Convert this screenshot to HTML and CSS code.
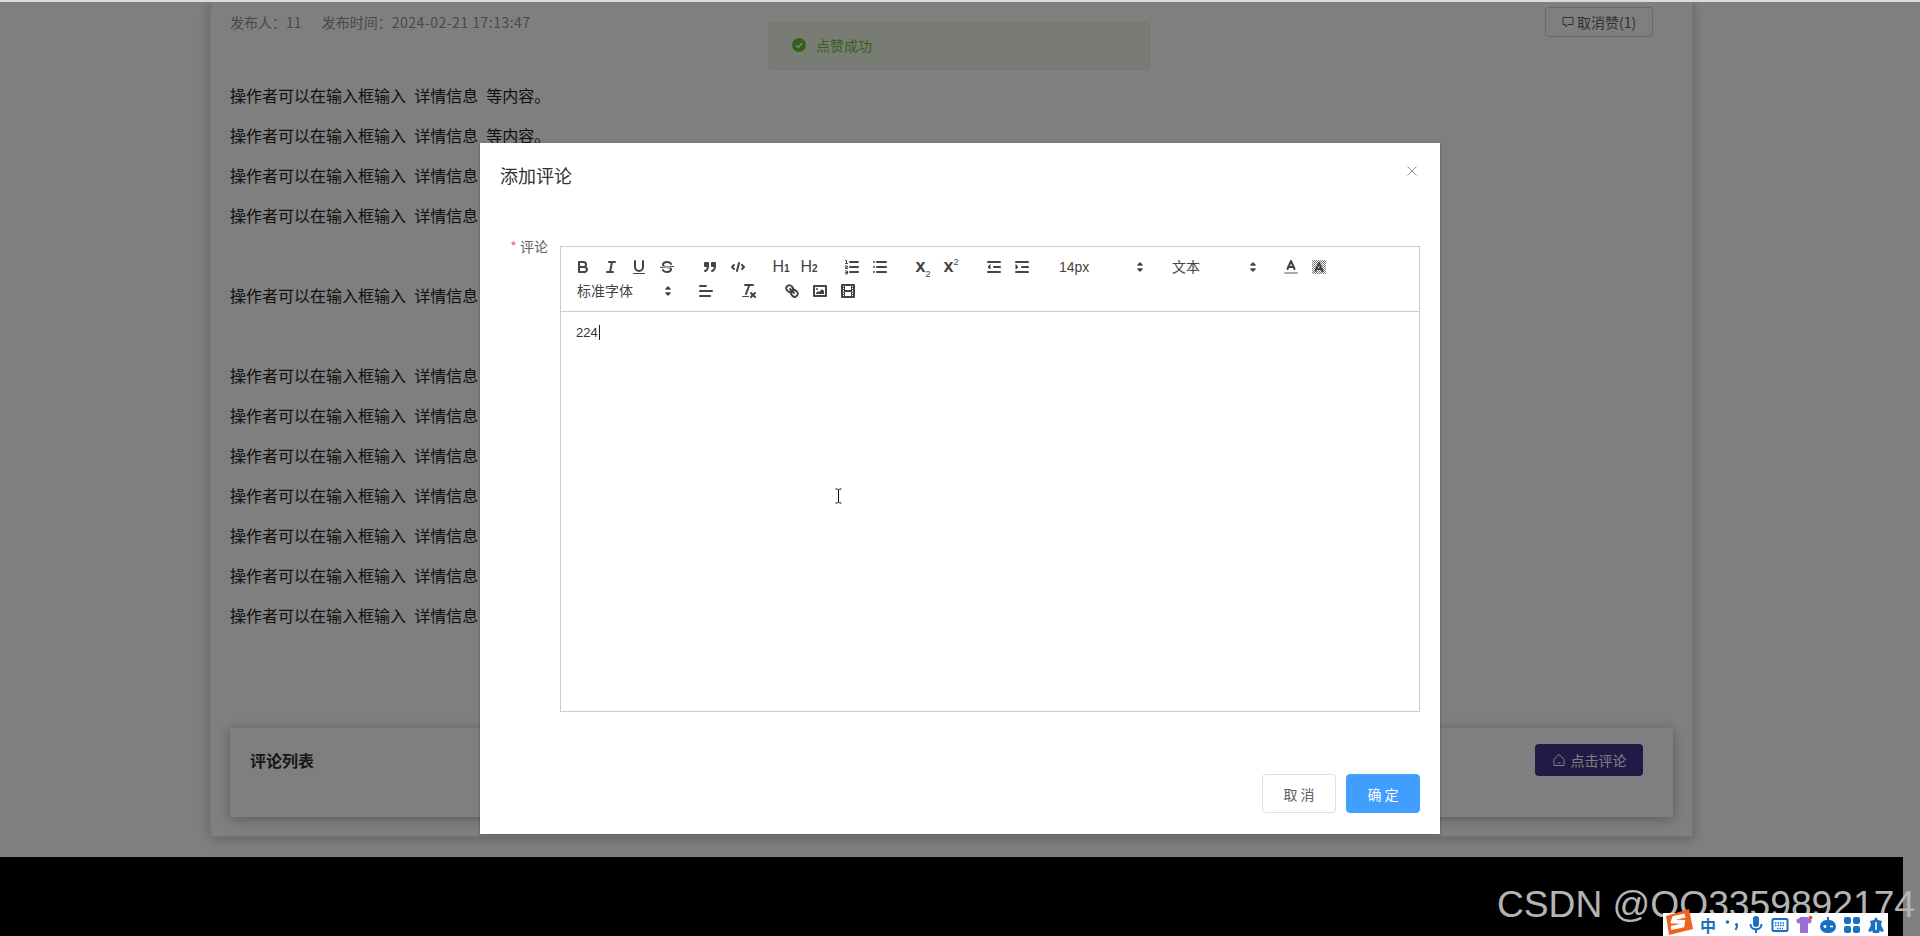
FILE: index.html
```html
<!DOCTYPE html>
<html lang="zh-CN">
<head>
    <meta charset="UTF-8">
    <meta name="viewport" content="width=device-width, initial-scale=1.0">
    <title>详情</title>
    <link rel="stylesheet" href="styles.css">
</head>
<body>
<div class="app">
    <div class="top-strip"></div>

    <div class="page">
        <div class="detail-card">
            <div class="meta-row">
                <div class="meta-text">发布人：11 <span class="meta-gap">发布时间：<span class="meta-date">2024-02-21 17:13:47</span></span></div>
                <button class="like-btn">
                    <svg class="like-icon" viewBox="0 0 14 14"><path d="M2 2.5h10v7H7l-2.5 2.500v-2.500H2z"/></svg>
                    取消赞(1)
                </button>
            </div>
            <div class="article">
                <p>操作者可以在输入框输入&nbsp;&nbsp;详情信息&nbsp;&nbsp;等内容。</p>
                <p>操作者可以在输入框输入&nbsp;&nbsp;详情信息&nbsp;&nbsp;等内容。</p>
                <p>操作者可以在输入框输入&nbsp;&nbsp;详情信息&nbsp;&nbsp;等内容。</p>
                <p>操作者可以在输入框输入&nbsp;&nbsp;详情信息&nbsp;&nbsp;等内容。</p>
                <p>&nbsp;</p>
                <p>操作者可以在输入框输入&nbsp;&nbsp;详情信息&nbsp;&nbsp;等内容。</p>
                <p>&nbsp;</p>
                <p>操作者可以在输入框输入&nbsp;&nbsp;详情信息&nbsp;&nbsp;等内容。</p>
                <p>操作者可以在输入框输入&nbsp;&nbsp;详情信息&nbsp;&nbsp;等内容。</p>
                <p>操作者可以在输入框输入&nbsp;&nbsp;详情信息&nbsp;&nbsp;等内容。</p>
                <p>操作者可以在输入框输入&nbsp;&nbsp;详情信息&nbsp;&nbsp;等内容。</p>
                <p>操作者可以在输入框输入&nbsp;&nbsp;详情信息&nbsp;&nbsp;等内容。</p>
                <p>操作者可以在输入框输入&nbsp;&nbsp;详情信息&nbsp;&nbsp;等内容。</p>
                <p>操作者可以在输入框输入&nbsp;&nbsp;详情信息&nbsp;&nbsp;等内容。</p>
            </div>
            <div class="comment-box">
                <div class="comment-title">评论列表</div>
                <button class="comment-btn">
                    <svg class="home-icon" viewBox="0 0 14 14"><path d="M2 6.200 7 1.500l5 4.700v6.300H2z"/><path d="M5.500 10h3"/></svg>
                    点击评论
                </button>
            </div>
        </div>

        <!-- 提示消息在遮罩下面 -->
        <div class="toast">
            <svg class="toast-icon" viewBox="0 0 14 14"><circle cx="7" cy="7" r="7"/><path d="M3.800 7.200 6.200 9.500l4-4.600"/></svg>
            <span>点赞成功</span>
        </div>
        <div class="mask"></div>
    </div>

    <div class="video-bar"></div>

    <!-- 添加评论弹窗 -->
    <div class="dialog">
        <div class="dialog-header">
            <span class="dialog-title">添加评论</span>
            <svg class="dialog-close" viewBox="0 0 12 12"><path d="M1.500 1.500l9 9M10.500 1.500l-9 9"/></svg>
        </div>
        <div class="form-row">
            <label class="form-label"><span class="required">*</span> 评论</label>
            <div class="editor">
                <div class="toolbar">
                    <span class="formats">
                        <span class="tool"><svg viewBox="0 0 18 18"><path class="st" d="M5,4H9.500A2.500,2.500,0,0,1,12,6.500v0A2.500,2.500,0,0,1,9.500,9H5V4Z"/><path class="st" d="M5,9h5.500A2.500,2.500,0,0,1,13,11.500v0A2.500,2.500,0,0,1,10.500,14H5V9Z"/></svg></span>
                        <span class="tool"><svg viewBox="0 0 18 18"><line class="st" x1="7" x2="13" y1="4" y2="4"/><line class="st" x1="5" x2="11" y1="14" y2="14"/><line class="st" x1="8" x2="10" y1="14" y2="4"/></svg></span>
                        <span class="tool"><svg viewBox="0 0 18 18"><path class="st" d="M5,3V9a4,4,0,0,0,4,4H9a4,4,0,0,0,4-4V3"/><rect class="fl" height="1" rx=".5" ry=".5" width="12" x="3" y="15"/></svg></span>
                        <span class="tool"><svg viewBox="0 0 18 18"><line class="st thin" x1="15.500" x2="2.500" y1="8.500" y2="9.500"/><path class="fl" d="M9.007,8C6.542,7.791,6,7.519,6,6.500,6,5.792,7.283,5,9,5c1.571,0,2.765.679,2.969,1.309a1,1,0,0,0,1.900-.617C13.356,4.106,11.354,3,9,3,6.200,3,4,4.538,4,6.500a3.200,3.200,0,0,0,.500,1.843Z"/><path class="fl" d="M8.984,10C11.457,10.208,12,10.479,12,11.500c0,.708-1.283,1.500-3,1.500-1.571,0-2.765-.679-2.969-1.309a1,1,0,1,0-1.900.617C4.644,13.894,6.646,15,9,15c2.800,0,5-1.538,5-3.500a3.200,3.200,0,0,0-.500-1.843Z"/></svg></span>
                    </span>
                    <span class="formats">
                        <span class="tool"><svg viewBox="0 0 18 18"><rect class="fl st" height="3" width="3" x="4" y="5"/><rect class="fl st" height="3" width="3" x="11" y="5"/><path class="st" d="M7,8c0,4.031-3,5-3,5"/><path class="st" d="M14,8c0,4.031-3,5-3,5"/></svg></span>
                        <span class="tool"><svg viewBox="0 0 18 18"><polyline class="st" points="5 7 3 9 5 11"/><polyline class="st" points="13 7 15 9 13 11"/><line class="st" x1="10" x2="8" y1="5" y2="13"/></svg></span>
                    </span>
                    <span class="formats">
                        <span class="tool tool-text">H<small>1</small></span>
                        <span class="tool tool-text">H<small>2</small></span>
                    </span>
                    <span class="formats">
                        <span class="tool"><svg viewBox="0 0 18 18"><line class="st" x1="7" x2="15" y1="4" y2="4"/><line class="st" x1="7" x2="15" y1="9" y2="9"/><line class="st" x1="7" x2="15" y1="14" y2="14"/><path class="st thin" d="M2.500 2.500h1v3M2.500 5.500h2M2.500 8h2v1.200h-2v1.300h2M2.500 13h2v3h-2M2.500 14.500h2"/></svg></span>
                        <span class="tool"><svg viewBox="0 0 18 18"><line class="st" x1="6" x2="15" y1="4" y2="4"/><line class="st" x1="6" x2="15" y1="9" y2="9"/><line class="st" x1="6" x2="15" y1="14" y2="14"/><line class="st" x1="3" x2="3" y1="4" y2="4"/><line class="st" x1="3" x2="3" y1="9" y2="9"/><line class="st" x1="3" x2="3" y1="14" y2="14"/></svg></span>
                    </span>
                    <span class="formats">
                        <span class="tool tool-script">x<sub>2</sub></span>
                        <span class="tool tool-script">x<sup>2</sup></span>
                    </span>
                    <span class="formats">
                        <span class="tool"><svg viewBox="0 0 18 18"><line class="st" x1="3" x2="15" y1="14" y2="14"/><line class="st" x1="3" x2="15" y1="4" y2="4"/><line class="st" x1="9" x2="15" y1="9" y2="9"/><polyline class="fl st thin" points="5 7 5 11 3 9 5 7"/></svg></span>
                        <span class="tool"><svg viewBox="0 0 18 18"><line class="st" x1="3" x2="15" y1="14" y2="14"/><line class="st" x1="3" x2="15" y1="4" y2="4"/><line class="st" x1="9" x2="15" y1="9" y2="9"/><polyline class="fl st thin" points="3 7 3 11 5 9 3 7"/></svg></span>
                    </span>
                    <span class="formats">
                        <span class="picker">14px<svg viewBox="0 0 18 18"><polygon class="fl st arrow" points="7 11 9 13 11 11 7 11"/><polygon class="fl st arrow" points="7 7 9 5 11 7 7 7"/></svg></span>
                    </span>
                    <span class="formats">
                        <span class="picker">文本<svg viewBox="0 0 18 18"><polygon class="fl st arrow" points="7 11 9 13 11 11 7 11"/><polygon class="fl st arrow" points="7 7 9 5 11 7 7 7"/></svg></span>
                    </span>
                    <span class="formats">
                        <span class="tool"><svg viewBox="0 0 18 18"><line class="st faint" x1="3" x2="15" y1="15" y2="15"/><polyline class="st" points="5.500 11 9 3 12.500 11"/><line class="st" x1="11.630" x2="6.380" y1="9" y2="9"/></svg></span>
                        <span class="tool"><svg viewBox="0 0 18 18"><defs><pattern id="dither" width="2" height="2" patternUnits="userSpaceOnUse"><rect class="dither-dot" width="1" height="1"/><rect class="dither-dot" x="1" y="1" width="1" height="1"/></pattern></defs><rect x="2" y="2" width="14" height="14" fill="url(#dither)"/><polyline class="st" points="5.500 13 9 5 12.500 13"/><line class="st" x1="11.630" x2="6.380" y1="11" y2="11"/></svg></span>
                    </span>
                    <span class="formats">
                        <span class="picker picker-font">标准字体<svg viewBox="0 0 18 18"><polygon class="fl st arrow" points="7 11 9 13 11 11 7 11"/><polygon class="fl st arrow" points="7 7 9 5 11 7 7 7"/></svg></span>
                    </span>
                    <span class="formats">
                        <span class="tool"><svg viewBox="0 0 18 18"><line class="st" x1="3" x2="15" y1="9" y2="9"/><line class="st" x1="3" x2="13" y1="14" y2="14"/><line class="st" x1="3" x2="9" y1="4" y2="4"/></svg></span>
                    </span>
                    <span class="formats">
                        <span class="tool"><svg viewBox="0 0 18 18"><line class="st" x1="5" x2="13" y1="3" y2="3"/><line class="st" x1="6" x2="9.350" y1="12" y2="3"/><line class="st" x1="11" x2="15" y1="11" y2="15"/><line class="st" x1="15" x2="11" y1="11" y2="15"/><rect class="fl" height="1" rx=".5" ry=".5" width="7" x="2" y="14"/></svg></span>
                    </span>
                    <span class="formats">
                        <span class="tool"><svg viewBox="0 0 18 18"><line class="st" x1="7" x2="11" y1="7" y2="11"/><path class="st" d="M8.900,4.577a3.476,3.476,0,0,1,.36,4.679A3.476,3.476,0,0,1,4.577,8.900C3.185,7.500,2.035,6.400,4.217,4.217S7.500,3.185,8.900,4.577Z"/><path class="st" d="M13.423,9.100a3.476,3.476,0,0,0-4.679-.36,3.476,3.476,0,0,0,.36,4.679c1.392,1.392,2.500,2.542,4.679.36S14.815,10.500,13.423,9.100Z"/></svg></span>
                        <span class="tool"><svg viewBox="0 0 18 18"><rect class="st" height="10" width="12" x="3" y="4"/><circle class="fl" cx="6" cy="7" r="1"/><polyline class="fl" points="5 12 5 11 7 9 8 10 11 7 13 9 13 12 5 12"/></svg></span>
                        <span class="tool"><svg viewBox="0 0 18 18"><rect class="st" height="12" width="12" x="3" y="3"/><rect class="fl" height="12" width="1" x="5" y="3"/><rect class="fl" height="12" width="1" x="12" y="3"/><rect class="fl" height="2" width="8" x="5" y="8"/><rect class="fl" height="1" width="3" x="3" y="5"/><rect class="fl" height="1" width="3" x="3" y="7"/><rect class="fl" height="1" width="3" x="3" y="10"/><rect class="fl" height="1" width="3" x="3" y="12"/><rect class="fl" height="1" width="3" x="12" y="5"/><rect class="fl" height="1" width="3" x="12" y="7"/><rect class="fl" height="1" width="3" x="12" y="10"/><rect class="fl" height="1" width="3" x="12" y="12"/></svg></span>
                    </span>
                </div>
                <div class="editor-body"><span class="typed">224</span></div>
            </div>
        </div>
        <div class="dialog-footer">
            <button class="btn">取 消</button>
            <button class="btn btn-primary">确 定</button>
        </div>
        <svg class="text-cursor" viewBox="0 0 9 16"><path d="M1.500 1h2l1 1 1-1h2M4.500 2v12M1.500 15h2l1-1 1 1h2"/></svg>
    </div>

    <div class="watermark">CSDN @QQ3359892174</div>

    <!-- 输入法状态栏 -->
    <div class="ime-bar">
        <svg class="ime-logo" viewBox="0 0 30 26"><path class="ime-logo-bg" d="M3 7 26 0l4 20-24 6z"/><path class="ime-logo-s" d="M22 6.500 11 9l-1 3.500 10 .5-.5 3.500L8 19"/></svg>
        <span class="ime-zh">中</span>
        <svg class="ime-icon" viewBox="0 0 18 18"><circle class="ime-fill" cx="4.500" cy="6" r="1.800"/><path class="ime-line" d="M14 9c.5 2-.5 3.500-1.500 5"/><circle class="ime-fill" cx="13.500" cy="8.500" r="1.500"/></svg>
        <svg class="ime-icon" viewBox="0 0 18 18"><rect class="ime-fill" x="6" y="0" width="6" height="11" rx="3"/><path class="ime-line" d="M3.500 8c0 7 11 7 11 0M9 13v4"/></svg>
        <svg class="ime-icon" viewBox="0 0 18 18"><rect class="ime-line" x="1.500" y="3" width="15" height="12" rx="1"/><path class="ime-dots" d="M4 7h10M4 9.500h10M6 12.500h6"/></svg>
        <svg class="ime-icon" viewBox="0 0 18 18"><path class="ime-shirt" d="M1 4l5-3h6l5 3-2 4-2-1v10H5V7L3 8z"/><circle class="ime-dot" cx="15.500" cy="1.500" r="2"/></svg>
        <svg class="ime-icon" viewBox="0 0 18 18"><rect class="ime-fill" x="1" y="4" width="16" height="13" rx="6.500"/><path class="ime-white" d="M4.500 10.500h3M6 9v3M11 10.500h3"/><path class="ime-line" d="M9 4V1"/></svg>
        <svg class="ime-icon" viewBox="0 0 18 18"><rect class="ime-fill" x="1" y="1" width="7" height="7" rx="2"/><rect class="ime-fill" x="10" y="1" width="7" height="7" rx="2"/><rect class="ime-fill" x="1" y="10" width="7" height="7" rx="2"/><rect class="ime-fill" x="10" y="10" width="7" height="7" rx="2"/></svg>
        <svg class="ime-icon" viewBox="0 0 18 18"><path class="ime-fill" d="M9 1l2 3 4 1-1 4 3 6-3 1-1-2-1 3H6l-1-3-1 2-3-1 3-6-1-4 4-1z"/><path class="ime-white" d="M9 6v8"/></svg>
    </div>
</div>
</body>
</html>
```

FILE: styles.css
```css
/* 页面基础 */
body {
    margin: 0;
    font-family: "Noto Sans CJK SC", "Noto Sans", sans-serif;
    background-color: #808080;
    color: #303133;
}

.app {
    position: relative;
    height: 936px;
    overflow: hidden;
}

.top-strip {
    height: 2px;
    background-color: #dcdcdc;
}

.page {
    position: relative;
    height: 855px;
    overflow: hidden;
    background-color: #fff;
}

.mask {
    position: absolute;
    inset: 0;
    background: rgba(0, 0, 0, 0.5);
}

.video-bar {
    height: 79px;
    margin-right: 17px;
    background-color: #000;
}

/* 详情卡片 */
.detail-card {
    margin: 0 227px 0 210px;
    height: 835px;
    padding: 5px 39px 20px 19px;
    box-sizing: border-box;
    background-color: #fff;
    border: 1px solid #e8e8e8;
    border-top: none;
    box-shadow: 0 2px 12px rgba(0, 0, 0, 0.25);
}

.meta-row {
    display: flex;
    justify-content: space-between;
    align-items: center;
    height: 30px;
}

.meta-text {
    font-size: 14px;
    color: #909399;
}

.meta-gap {
    margin-left: 17px;
}

.meta-date {
    letter-spacing: 0.5px;
}

.like-btn {
    display: flex;
    align-items: center;
    gap: 2px;
    width: 108px;
    height: 30px;
    padding: 0 15px;
    box-sizing: border-box;
    border: 1px solid #d0d2d6;
    border-radius: 3px;
    background-color: #fff;
    color: #606266;
    font: inherit;
    font-size: 14px;
    white-space: nowrap;
}

.like-icon {
    width: 14px;
    height: 14px;
    fill: none;
    stroke: #606266;
}

.article {
    margin-top: 38px;
    margin-right: -20px;
    font-size: 16px;
    line-height: 40px;
    word-spacing: 0.5px;
    color: #222;
}

.article p {
    margin: 0;
}

.comment-box {
    display: flex;
    justify-content: space-between;
    align-items: center;
    height: 89px;
    margin-top: 93px;
    margin-right: -20px;
    padding: 0 30px 25px 20px;
    box-sizing: border-box;
    background-color: #fff;
    box-shadow: 0 2px 12px rgba(0, 0, 0, 0.3);
}

.comment-title {
    font-size: 16px;
    font-weight: 700;
    color: #303133;
}

.comment-btn {
    display: flex;
    align-items: center;
    justify-content: center;
    gap: 5px;
    width: 108px;
    height: 32px;
    padding: 0;
    border: none;
    border-radius: 4px;
    background-color: #41358f;
    color: #fff;
    font: inherit;
    font-size: 14px;
}

.home-icon {
    width: 14px;
    height: 14px;
    fill: none;
    stroke: #fff;
}

/* 提示消息 */
.toast {
    position: absolute;
    left: 769px;
    top: 20px;
    display: flex;
    align-items: center;
    gap: 10px;
    width: 381px;
    height: 48px;
    padding: 0 0 2px 22px;
    box-sizing: border-box;
    background-color: #f0f9eb;
    border: 1px solid #e1f3d8;
    border-radius: 4px;
    color: #67c23a;
    font-size: 14px;
}

.toast-icon {
    width: 14px;
    height: 14px;
}

.toast-icon circle {
    fill: #67c23a;
}

.toast-icon path {
    fill: none;
    stroke: #fff;
    stroke-width: 1.500;
}

/* 弹窗 */
.dialog {
    position: absolute;
    left: 480px;
    top: 143px;
    display: flex;
    flex-direction: column;
    width: 960px;
    height: 691px;
    background-color: #fff;
    box-shadow: 0 1px 3px rgba(0, 0, 0, 0.3);
}

.dialog-header {
    display: flex;
    justify-content: space-between;
    align-items: flex-start;
    padding: 20px 22px 0 20px;
    height: 62px;
    box-sizing: border-box;
}

.dialog-title {
    font-size: 18px;
    line-height: 24px;
    color: #303133;
}

.dialog-close {
    width: 12px;
    height: 12px;
    margin-top: 2px;
    fill: none;
    stroke: #909399;
    stroke-width: 1;
}

.form-row {
    display: flex;
    margin: 21px 20px 0;
}

.form-label {
    width: 60px;
    padding-right: 12px;
    box-sizing: border-box;
    font-size: 14px;
    line-height: 40px;
    text-align: right;
    white-space: nowrap;
    color: #606266;
}

.required {
    color: #f56c6c;
}

.editor {
    width: 860px;
    height: 466px;
    margin-top: 20px;
    box-sizing: border-box;
    border: 1px solid #ccc;
    display: flex;
    flex-direction: column;
}

/* 工具栏 */
.toolbar {
    display: flex;
    flex-wrap: wrap;
    height: 65px;
    padding: 8px 8px 8px;
    box-sizing: border-box;
    border-bottom: 1px solid #ccc;
    color: #444;
    font-family: "Liberation Sans", "Noto Sans CJK SC", sans-serif;
}

.formats {
    display: inline-flex;
    margin-right: 15px;
}

.tool {
    display: block;
    width: 28px;
    height: 24px;
    padding: 3px 5px;
    box-sizing: border-box;
}

.tool svg,
.picker svg {
    display: block;
    width: 18px;
    height: 18px;
}

.st {
    fill: none;
    stroke: #444;
    stroke-width: 2;
    stroke-linecap: round;
    stroke-linejoin: round;
}

.thin {
    stroke-width: 1;
}

.arrow {
    fill: #444;
    stroke-width: 1.500;
}

.fl {
    fill: #444;
}

.dither-dot {
    fill: #777;
}

.faint {
    stroke: #aaa;
}

.tool-text {
    font-size: 16px;
    font-weight: 500;
    line-height: 18px;
    text-align: center;
    padding: 3px 0;
}

.tool-text small {
    font-size: 10px;
    font-weight: 700;
}

.tool-script {
    font-size: 18px;
    font-weight: 700;
    line-height: 16px;
    text-align: center;
    padding: 3px 0;
}

.tool-script sub,
.tool-script sup {
    font-size: 9px;
    font-weight: 400;
    line-height: 0;
}

.picker {
    display: flex;
    justify-content: space-between;
    align-items: center;
    width: 98px;
    height: 24px;
    padding-left: 8px;
    box-sizing: border-box;
    font-size: 14px;
    line-height: 22px;
    white-space: nowrap;
}

.picker-font {
    width: 108px;
}

.editor-body {
    flex: 1;
    padding: 11px 15px;
    font-family: "Liberation Sans", sans-serif;
    font-size: 13px;
    line-height: 19px;
    color: #303133;
}

.typed {
    border-right: 1px solid #222;
    padding-right: 1px;
}

.dialog-footer {
    display: flex;
    justify-content: flex-end;
    gap: 10px;
    margin-top: auto;
    padding: 0 20px 21px;
}

.btn {
    width: 74px;
    height: 39px;
    padding: 0;
    box-sizing: border-box;
    border: 1px solid #dcdfe6;
    border-radius: 4px;
    background-color: #fff;
    color: #606266;
    font: inherit;
    font-size: 14px;
}

.btn-primary {
    border-color: #409eff;
    background-color: #409eff;
    color: #fff;
}

.text-cursor {
    position: absolute;
    left: 354px;
    top: 345px;
    width: 9px;
    height: 16px;
    fill: none;
    stroke: #111;
}

/* 水印和输入法 */
.watermark {
    position: absolute;
    right: 5px;
    top: 882px;
    font-family: "Liberation Sans", sans-serif;
    font-size: 37.2px;
    line-height: 44px;
    color: #b4b4b4;
    white-space: nowrap;
}

.ime-bar {
    position: absolute;
    left: 1663px;
    bottom: 0;
    display: flex;
    align-items: center;
    gap: 6px;
    width: 225px;
    height: 23px;
    background-color: #fff;
    box-sizing: border-box;
}

.ime-logo {
    width: 30px;
    height: 26px;
    margin-top: -6px;
    flex: none;
}

.ime-logo-bg {
    fill: #f0601e;
}

.ime-logo-s {
    fill: none;
    stroke: #fff;
    stroke-width: 4;
}

.ime-zh {
    width: 18px;
    font-size: 16px;
    font-weight: 700;
    line-height: 18px;
    color: #1a6fc0;
    text-align: center;
}

.ime-icon {
    width: 18px;
    height: 18px;
    flex: none;
}

.ime-fill {
    fill: #1a6fc0;
}

.ime-line {
    fill: none;
    stroke: #1a6fc0;
    stroke-width: 2;
}

.ime-dots {
    fill: none;
    stroke: #1a6fc0;
    stroke-width: 1.500;
    stroke-dasharray: 1.500 1;
}

.ime-shirt {
    fill: #9a6fd8;
}

.ime-dot {
    fill: #f0503c;
}

.ime-white {
    fill: none;
    stroke: #fff;
    stroke-width: 1.500;
}
```
